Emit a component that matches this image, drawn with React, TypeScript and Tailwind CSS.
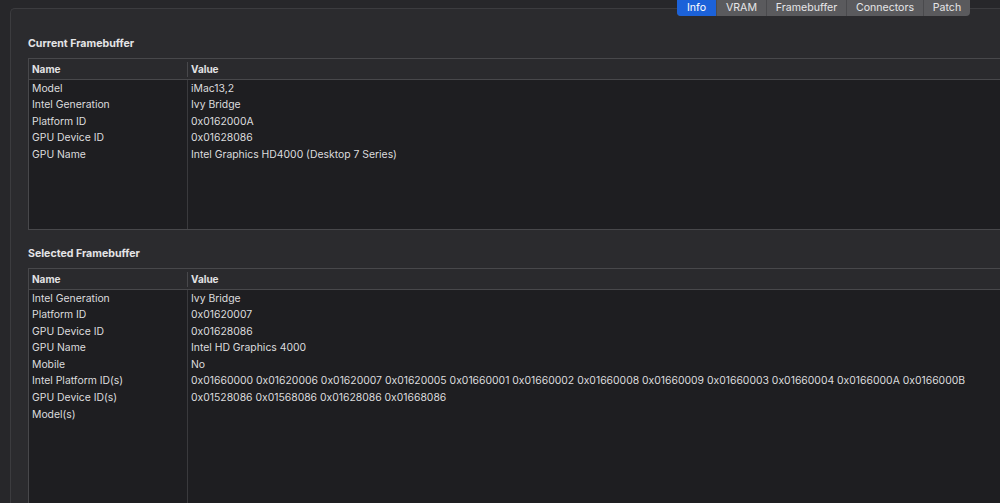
import React from 'react';

type Row = [string, string];

const current: Row[] = [
  ['Model', 'iMac13,2'],
  ['Intel Generation', 'Ivy Bridge'],
  ['Platform ID', '0x0162000A'],
  ['GPU Device ID', '0x01628086'],
  ['GPU Name', 'Intel Graphics HD4000 (Desktop 7 Series)'],
];

const selected: Row[] = [
  ['Intel Generation', 'Ivy Bridge'],
  ['Platform ID', '0x01620007'],
  ['GPU Device ID', '0x01628086'],
  ['GPU Name', 'Intel HD Graphics 4000'],
  ['Mobile', 'No'],
  [
    'Intel Platform ID(s)',
    '0x01660000 0x01620006 0x01620007 0x01620005 0x01660001 0x01660002 0x01660008 0x01660009 0x01660003 0x01660004 0x0166000A 0x0166000B',
  ],
  ['GPU Device ID(s)', '0x01528086 0x01568086 0x01628086 0x01668086'],
  ['Model(s)', ''],
];

const tabs: [string, string][] = [
  ['Info', 'w-[39px]'],
  ['VRAM', 'w-[50px]'],
  ['Framebuffer', 'w-[80px]'],
  ['Connectors', 'w-[77px]'],
  ['Patch', 'w-[47px]'],
];

function InfoTable({ rows, height }: { rows: Row[]; height: string }) {
  return (
    <div className={`ml-[17px] mr-[-4px] border border-[#48484b] bg-[#1e1e21] flex flex-col ${height}`}>
      {/* header */}
      <div className="flex h-[21px] shrink-0 items-center bg-[#2a2a2d] border-b border-[#48484b] font-bold text-[#e2e2e4] text-[10px]">
        <div className="w-[158px] shrink-0 pl-[3px] h-full flex items-center">Name</div>
        <div className="w-px h-[15px] bg-[#48484b] shrink-0" />
        <div className="pl-[3px]">Value</div>
      </div>
      <div className="flex flex-1 min-h-0">
        <div className="w-[159px] shrink-0 border-r border-[#3a3a3d] pt-[0.5px]">
          {rows.map(([n]) => (
            <div key={n} className="h-[16.6px] pl-[3px] leading-[16.6px] whitespace-nowrap">{n}</div>
          ))}
        </div>
        <div className="flex-1 min-w-0 pt-[0.5px]">
          {rows.map(([n, v]) => (
            <div key={n} className="h-[16.6px] pl-[3px] leading-[16.6px] whitespace-nowrap">{v}</div>
          ))}
        </div>
      </div>
    </div>
  );
}

export default function App() {
  return (
    <div
      className="w-[1000px] h-[503px] overflow-hidden bg-[#27272a] text-[#dcdcde] text-[10.4px] relative"
      style={{ fontFamily: 'Inter, "Liberation Sans", sans-serif' }}
    >
      <div className="ml-[10px] mt-[8px] h-[600px] rounded-tl-[5px] border-l border-t border-[#3c3c3f] bg-[#2b2b2e]">
        <div className="pt-[27px] pl-[17px] pb-[6px] font-bold text-[10.6px] leading-[16px] text-[#e4e4e6]">Current Framebuffer</div>
        <InfoTable rows={current} height="h-[172px]" />
        <div className="pt-[16px] pl-[17px] pb-[6px] font-bold text-[10.6px] leading-[16px] text-[#e4e4e6]">Selected Framebuffer</div>
        <InfoTable rows={selected} height="h-[300px]" />
      </div>

      {/* segmented tabs straddling top edge */}
      <div className="absolute left-[677px] top-[-4px] flex h-[20px] rounded-[4px] overflow-hidden bg-[#5a5a5d] text-[10.6px]">
        {tabs.map(([t, w], i) => (
          <div
            key={t}
            className={
              i === 0
                ? `${w} flex items-center justify-center pt-[3px] bg-[#1c62d9] text-white`
                : `${w} flex items-center justify-center pt-[3px] text-[#e6e6e8] border-l border-[#4a4a4d]`
            }
          >
            {t}
          </div>
        ))}
      </div>
    </div>
  );
}
